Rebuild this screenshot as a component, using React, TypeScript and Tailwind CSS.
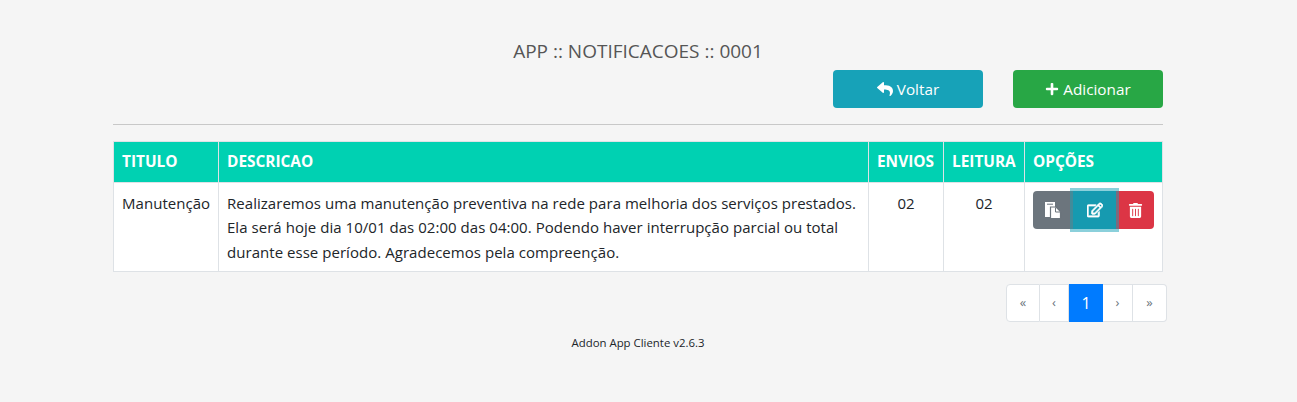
import { FaReply, FaPlus, FaRegEdit, FaTrashAlt } from "react-icons/fa";

export default function App() {
  const th = "border border-[#dee2e6] px-2 py-0 text-left font-bold align-middle text-[15.4px] tracking-normal";
  const td = "border border-[#dee2e6] px-2 pt-[8px] pb-[7px] align-top";
  const page = "flex items-center justify-center border-y border-r border-[#dee2e6] bg-white text-[#6c757d] text-[13px]";
  return (
    <div className="h-[402px] bg-[#f5f5f5] text-[#212529] [font-family:'Open_Sans','Noto_Sans',sans-serif] pt-[39px]">
      <div className="w-[1050px] ml-[113px]">
        <h1 className="text-center text-[19px] leading-[25px] text-[#555] font-normal">APP :: NOTIFICACOES :: 0001</h1>
        <div className="flex justify-end gap-[30px] mt-[6px]">
          <button className="w-[150px] h-[38px] rounded bg-[#17a2b8] text-white text-[15.3px] flex items-center justify-center gap-[4px]">
            <FaReply className="text-[16px]" /> Voltar
          </button>
          <button className="w-[150px] h-[38px] rounded bg-[#28a745] text-white text-[15.3px] flex items-center justify-center gap-[4px]">
            <FaPlus className="text-[14px]" /> Adicionar
          </button>
        </div>
        <hr className="mt-[16px] border-0 border-t border-[#c8c8c8]" />
        <table className="mt-[16px] w-[1049px] table-fixed border-collapse text-[15px] tracking-[0.04px] leading-[24.4px] bg-white">
          <colgroup>
            <col className="w-[105px]" />
            <col className="w-[650px]" />
            <col className="w-[75px]" />
            <col className="w-[81px]" />
            <col className="w-[138px]" />
          </colgroup>
          <thead>
            <tr className="h-[41px] bg-[#00d1b2] text-white">
              <th className={th}>TITULO</th>
              <th className={th}>DESCRICAO</th>
              <th className={th}>ENVIOS</th>
              <th className={th}>LEITURA</th>
              <th className={th}>OPÇÕES</th>
            </tr>
          </thead>
          <tbody>
            <tr>
              <td className={td}>Manutenção</td>
              <td className={td}>
                Realizaremos uma manutenção preventiva na rede para melhoria dos serviços prestados. Ela será hoje dia 10/01 das 02:00 das 04:00. Podendo haver interrupção parcial ou total durante esse período. Agradecemos pela compreenção.
              </td>
              <td className={td + " text-center"}>02</td>
              <td className={td + " text-center"}>02</td>
              <td className={td}>
                <div className="flex h-[38px] w-[121px]">
                  <button className="w-[40px] h-[38px] rounded-l bg-[#6c757d] text-white flex items-center justify-center">
                    <svg width="18" height="18" viewBox="0 0 18 18" fill="none">
                      <path d="M1 1h10v15H1z" fill="#fff" />
                      <path d="M3 3.2h6" stroke="#6c757d" strokeWidth="1" />
                      <path d="M6.5 6h5.5l4.5 4.5V17.5H6.5z" fill="#fff" stroke="#6c757d" strokeWidth="1.2" />
                      <path d="M11.5 6.5v4.5h4.5" stroke="#6c757d" strokeWidth="1" />
                    </svg>
                  </button>
                  <button className="w-[43px] h-[38px] bg-[#169ab0] text-white flex items-center justify-center shadow-[0_0_0_3px_rgba(23,162,184,0.5)] relative z-10"><FaRegEdit className="text-[16px]" stroke="currentColor" strokeWidth={24} /></button>
                  <button className="w-[38px] h-[38px] rounded-r bg-[#dc3545] text-white flex items-center justify-center"><FaTrashAlt className="text-[15px]" /></button>
                </div>
              </td>
            </tr>
          </tbody>
        </table>
        <div className="flex justify-end mt-[12px] -mr-[4px]">
          <div className="flex h-[38px]">
            <span className={page + " w-[34px] border-l rounded-l"}>«</span>
            <span className={page + " w-[29px]"}>‹</span>
            <span className="w-[34px] flex items-center justify-center bg-[#007bff] text-white text-[16px]">1</span>
            <span className={page + " w-[30px]"}>›</span>
            <span className={page + " w-[34px] rounded-r"}>»</span>
          </div>
        </div>
        <p className="text-center text-[11.4px] leading-[16px] mt-[13px] text-[#212529]">Addon App Cliente v2.6.3</p>
      </div>
    </div>
  );
}
